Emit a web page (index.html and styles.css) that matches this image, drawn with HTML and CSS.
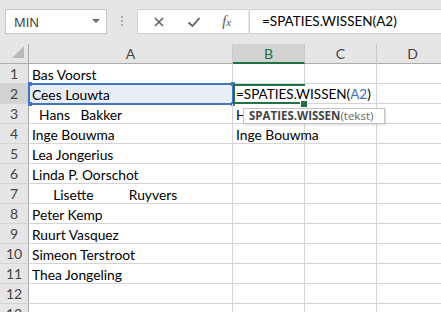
FILE: index.html
```html
<!doctype html>
<html lang="nl">
<head>
    <meta charset="utf-8">
    <title>SPATIES.WISSEN</title>
    <link rel="stylesheet" href="styles.css">
</head>
<body>
    <div class="fbar">
        <div class="namebox">
            <span>MIN</span>
            <svg width="8" height="5" viewBox="0 0 8 5"><path d="M0 0h8L4 4z" fill="#6a6a6a"/></svg>
        </div>
        <div class="grip">
            <svg width="3" height="11" viewBox="0 0 3 11"><g fill="#aaa"><rect x="0" y="0" width="2" height="2"/><rect x="0" y="4" width="2" height="2"/><rect x="0" y="8" width="2" height="2"/></g></svg>
        </div>
        <div class="buttons">
            <svg width="12" height="12" viewBox="0 0 12 12"><path d="M2 2l8 8M10 2l-8 8" stroke="#606060" stroke-width="1.6"/></svg>
            <svg width="14" height="12" viewBox="0 0 14 12"><path d="M1.5 6.5l4 3.5 7-8" stroke="#606060" stroke-width="1.8" fill="none"/></svg>
            <span class="fx">f<i>x</i></span>
        </div>
        <div class="formula">=SPATIES.WISSEN(A2)</div>
    </div>

    <div class="sheet">
        <div class="corner"><svg width="14" height="14" viewBox="0 0 14 14"><path d="M13 1v12H1z" fill="#b9b9b9"/></svg></div>
        <div class="ch">A</div>
        <div class="ch sel">B</div>
        <div class="ch">C</div>
        <div class="ch">D</div>

        <div class="rh">1</div><div class="c">Bas Voorst</div><div class="c"></div><div class="c"></div><div class="c"></div>
        <div class="rh sel">2</div><div class="c ref">Cees Louwta</div><div class="c active"><span class="ftext">=SPATIES.WISSEN(<span class="blue">A2</span>)</span><div class="tip"><b>SPATIES.WISSEN</b><span>(tekst)</span></div></div><div class="c"></div><div class="c"></div>
        <div class="rh">3</div><div class="c">  Hans   Bakker</div><div class="c">Hans Bakker</div><div class="c"></div><div class="c"></div>
        <div class="rh">4</div><div class="c">Inge Bouwma</div><div class="c">Inge Bouwma</div><div class="c"></div><div class="c"></div>
        <div class="rh">5</div><div class="c">Lea Jongerius</div><div class="c"></div><div class="c"></div><div class="c"></div>
        <div class="rh">6</div><div class="c">Linda P. Oorschot</div><div class="c"></div><div class="c"></div><div class="c"></div>
        <div class="rh">7</div><div class="c">      Lisette          Ruyvers</div><div class="c"></div><div class="c"></div><div class="c"></div>
        <div class="rh">8</div><div class="c">Peter Kemp</div><div class="c"></div><div class="c"></div><div class="c"></div>
        <div class="rh">9</div><div class="c">Ruurt Vasquez</div><div class="c"></div><div class="c"></div><div class="c"></div>
        <div class="rh">10</div><div class="c">Simeon Terstroot</div><div class="c"></div><div class="c"></div><div class="c"></div>
        <div class="rh">11</div><div class="c">Thea Jongeling</div><div class="c"></div><div class="c"></div><div class="c"></div>
        <div class="rh">12</div><div class="c"></div><div class="c"></div><div class="c"></div><div class="c"></div>
        <div class="rh">13</div><div class="c"></div><div class="c"></div><div class="c"></div><div class="c"></div>
    </div>
</body>
</html>
```

FILE: styles.css
```css
* {
    margin: 0;
    padding: 0;
    box-sizing: border-box;
}

body {
    width: 441px;
    height: 312px;
    overflow: hidden;
    background-color: #e6e6e6;
    font-family: "Lato", "Liberation Sans", sans-serif;
    color: #000;
}

.fbar {
    display: flex;
    align-items: stretch;
    height: 44px;
    padding: 9px 0 10px 5px;
}

.namebox {
    display: flex;
    align-items: center;
    justify-content: space-between;
    width: 102px;
    padding: 0 6px 0 8px;
    background-color: white;
    border: 1px solid #c6c6c6;
    font-family: "Open Sans", sans-serif;
    font-size: 13px;
    color: #333;
}

.grip {
    display: flex;
    align-items: center;
    justify-content: center;
    width: 30px;
}

.buttons {
    display: flex;
    align-items: center;
    justify-content: space-around;
    width: 111px;
    padding: 0 6px 0 4px;
    background-color: white;
    border: 1px solid #d0d0d0;
    border-right: none;
}

.fx {
    font-family: "Liberation Serif", serif;
    font-style: italic;
    font-size: 14px;
    color: #555;
}

.fx i {
    font-size: 11px;
}

.formula {
    flex: 1;
    margin-left: 1px;
    padding-left: 12px;
    background-color: white;
    border: 1px solid #d0d0d0;
    border-right: none;
    font-size: 13.5px;
    line-height: 23px;
    white-space: nowrap;
}

.sheet {
    display: grid;
    grid-template-columns: 29px 204px 72px 72px 72px;
    grid-auto-rows: 20px;
    background-color: white;
    font-size: 13.8px;
}

.corner {
    display: flex;
    align-items: flex-end;
    justify-content: flex-end;
    padding: 0 3px 4px 0;
    background-color: #e6e6e6;
    border-right: 1px solid #ababab;
    border-bottom: 1px solid #ababab;
}

.ch {
    background-color: #e6e6e6;
    border-right: 1px solid #cbcbcb;
    border-bottom: 1px solid #ababab;
    text-align: center;
    line-height: 20px;
    font-size: 14px;
    color: #444;
}

.ch.sel {
    background-color: #d2d2d2;
    border-bottom: 2px solid #217346;
    color: #1e6a3e;
}

.rh {
    background-color: #e6e6e6;
    border-right: 1px solid #ababab;
    border-bottom: 1px solid #d4d4d4;
    text-align: center;
    line-height: 20px;
    font-size: 14px;
    color: #444;
}

.rh.sel {
    background-color: #d2d2d2;
}

.c {
    position: relative;
    padding: 0 3px;
    border-right: 1px solid #d4d4d4;
    border-bottom: 1px solid #d4d4d4;
    line-height: 21px;
    white-space: pre;
}

.ref {
    background-color: #e8eef8;
    outline: 2px solid #4472c4;
    outline-offset: -1px;
}

.ref::before,
.ref::after {
    content: "";
    position: absolute;
    top: -2px;
    width: 4px;
    height: 4px;
    background-color: #4472c4;
    box-shadow: 0 20px 0 #4472c4;
}

.ref::before {
    left: -1px;
}

.ref::after {
    right: -3px;
}

.active {
    z-index: 1;
    border: 2px solid #217346;
    border-right: none;
    padding-left: 1px;
    line-height: 16px;
}

.active::after {
    content: "";
    position: absolute;
    right: -3px;
    bottom: -6px;
    width: 6px;
    height: 6px;
    background-color: #217346;
    border: 1px solid white;
}

.ftext {
    font-size: 13.5px;
}

.blue {
    color: #3c6fbf;
}

.tip {
    position: absolute;
    left: 8px;
    top: 22px;
    display: flex;
    width: 142px;
    height: 16px;
    padding: 0 5px;
    background-color: white;
    border: 1px solid #c3c3c3;
    box-shadow: 1px 1px 2px rgba(0, 0, 0, 0.15);
    font-family: "Open Sans", sans-serif;
    font-size: 11.5px;
    line-height: 14px;
    color: #444;
}

.tip span {
    color: #666;
}
```
